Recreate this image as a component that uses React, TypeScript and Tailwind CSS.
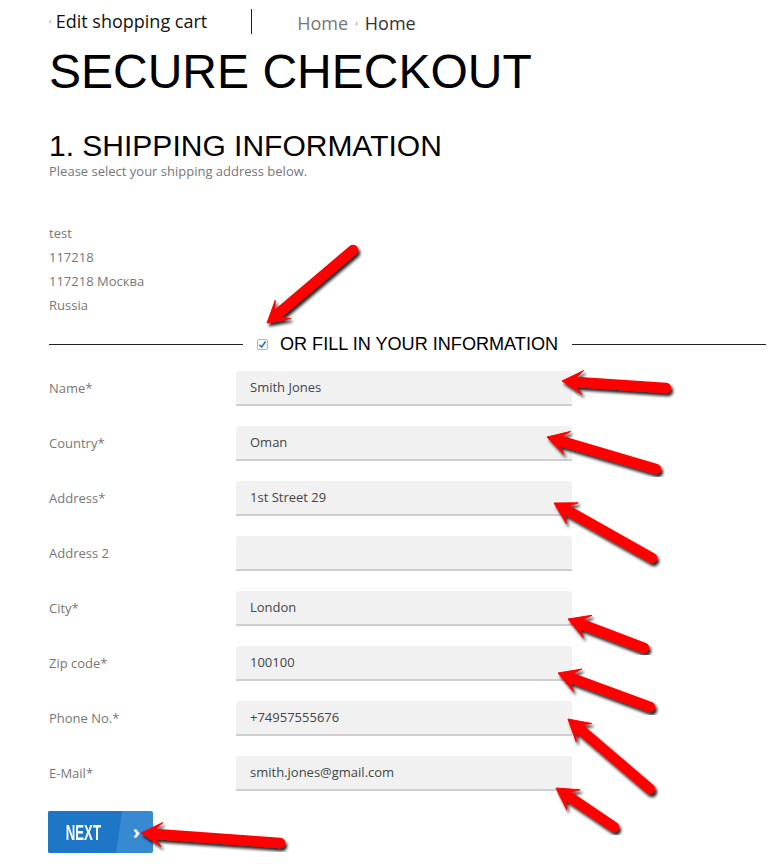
import React from 'react';

const sans = { fontFamily: '"Open Sans", "Noto Sans", sans-serif' };

interface ArrowProps {
  x1: number;
  y1: number;
  x2: number;
  y2: number;
}

// red annotation arrow, tail (x1,y1) -> tip (x2,y2)
function Arrow({ x1, y1, x2, y2 }: ArrowProps) {
  const dx = x2 - x1;
  const dy = y2 - y1;
  const len = Math.hypot(dx, dy);
  const ux = dx / len;
  const uy = dy / len;
  const nx = -uy;
  const ny = ux;
  const H = 21;
  const W = 12;
  const bx = x2 - ux * H;
  const by = y2 - uy * H;
  const nkx = x2 - ux * (H * 0.7);
  const nky = y2 - uy * (H * 0.7);
  const head = [
    [x2, y2],
    [bx + nx * W, by + ny * W],
    [nkx + nx * 5, nky + ny * 5],
    [nkx - nx * 5, nky - ny * 5],
    [bx - nx * W, by - ny * W],
  ]
    .map((p) => p.join(','))
    .join(' ');
  return (
    <g filter="url(#arrowShadow)">
      <line x1={x1} y1={y1} x2={nkx} y2={nky} stroke="#ff0000" strokeWidth="10.5" strokeLinecap="round" />
      <polygon points={head} fill="#ff0000" strokeLinejoin="round" stroke="#ff0000" strokeWidth="1" />
    </g>
  );
}

const arrows: ArrowProps[] = [
  { x1: 353, y1: 250, x2: 267, y2: 323 },
  { x1: 666, y1: 388, x2: 562, y2: 381 },
  { x1: 656, y1: 469, x2: 547, y2: 437 },
  { x1: 652, y1: 558, x2: 554, y2: 503 },
  { x1: 644, y1: 648, x2: 568, y2: 619 },
  { x1: 650, y1: 707, x2: 558, y2: 673 },
  { x1: 650, y1: 789, x2: 568, y2: 719 },
  { x1: 614, y1: 827, x2: 556, y2: 788 },
  { x1: 280, y1: 843, x2: 141, y2: 833 },
];

const fields = [
  { label: 'Name*', value: 'Smith Jones' },
  { label: 'Country*', value: 'Oman' },
  { label: 'Address*', value: '1st Street 29' },
  { label: 'Address 2', value: '' },
  { label: 'City*', value: 'London' },
  { label: 'Zip code*', value: '100100' },
  { label: 'Phone No.*', value: '+74957555676' },
  { label: 'E-Mail*', value: 'smith.jones@gmail.com' },
];

export default function App() {
  return (
    <div className="relative w-full h-[864px] overflow-hidden bg-white">
      <div className="pl-[49px] pr-[18px]">
        {/* breadcrumbs */}
        <div className="flex items-start mt-[9px] h-[25px]" style={sans}>
          <span className="text-[9px] leading-[24px] text-[#c48a8a] mr-[4px]">‹</span>
          <span className="text-[18px] leading-[24px] text-[#111]">Edit shopping cart</span>
          <span className="w-px h-[25px] bg-[#222] ml-[44px]" />
          <div className="flex items-center ml-[45px] mt-[2px] text-[18px] leading-[24px]">
            <span className="text-[#777]">Home</span>
            <span className="text-[9px] text-[#d0704a] mx-[7px]">›</span>
            <span className="text-[#333]">Home</span>
          </div>
        </div>

        <h1
          className="mt-[14px] text-[48px] leading-[48px] text-black"
          style={{ fontFamily: '"Liberation Sans", Arial, sans-serif' }}
        >
          SECURE CHECKOUT
        </h1>

        <h2
          className="mt-[35px] text-[30px] leading-[30px] text-black"
          style={{ fontFamily: '"Liberation Sans", Arial, sans-serif' }}
        >
          1. SHIPPING INFORMATION
        </h2>
        <p className="mt-[1px] text-[13px] leading-[18px] text-[#777]" style={sans}>
          Please select your shipping address below.
        </p>

        <div className="mt-[41px] text-[13px] leading-[24px] text-[#777]" style={sans}>
          <div>test</div>
          <div>117218</div>
          <div>117218 Москва</div>
          <div>Russia</div>
        </div>

        {/* divider */}
        <div className="mt-[17px] h-[20px] flex items-center">
          <div className="flex-1 h-px bg-[#222]" />
          <span className="ml-[14px] w-[11px] h-[11px] border border-[#b5b5b5] rounded-[2px] bg-white flex items-center justify-center">
            <svg width="9" height="9" viewBox="0 0 8 8">
              <path d="M1.2 4.2 L3.2 6.2 L6.8 1.4" fill="none" stroke="#2d6fc0" strokeWidth="1.4" />
            </svg>
          </span>
          <span
            className="ml-[12px] mr-[14px] text-[18.1px] leading-[20px] text-black"
            style={{ fontFamily: '"Liberation Sans", Arial, sans-serif' }}
          >
            OR FILL IN YOUR INFORMATION
          </span>
          <div className="flex-1 h-px bg-[#222]" />
        </div>

        {/* form */}
        <div className="mt-[17px] flex flex-col gap-[20px]" style={sans}>
          {fields.map((f) => (
            <div key={f.label} className="flex items-center h-[35px]">
              <span className="w-[187px] text-[13px] text-[#777]">{f.label}</span>
              <div className="w-[336px] h-[35px] bg-[#f1f1f1] border-b-2 border-[#cfcfcf] rounded-t-[3px] pl-[14px] flex items-center text-[13px] text-[#444]">
                {f.value}
              </div>
            </div>
          ))}
        </div>

        <button className="mt-[20px] -ml-px relative flex w-[105px] h-[42px] bg-[#3789d2] rounded-[2px] overflow-hidden">
          <span className="w-[74px] h-full bg-[#1d76c6] flex items-center justify-center [clip-path:polygon(0_0,100%_0,calc(100%-6px)_100%,0_100%)]">
            <span
              className="inline-block text-white text-[22px] leading-none font-bold scale-x-[0.6] -ml-[4px] mt-[2px]"
              style={{ fontFamily: '"Liberation Sans", Arial, sans-serif' }}
            >
              NEXT
            </span>
          </span>
          <span className="flex-1 h-full flex items-center justify-center text-white text-[20px] font-bold pr-[2px]" style={sans}>
            ›
          </span>
        </button>
      </div>

      {/* annotation arrows */}
      <svg className="absolute inset-0 pointer-events-none" width="784" height="864">
        <defs>
          <filter id="arrowShadow" x="-20%" y="-20%" width="140%" height="140%">
            <feDropShadow dx="2" dy="3" stdDeviation="1.6" floodColor="#000" floodOpacity="0.85" />
          </filter>
        </defs>
        {arrows.map((a, i) => (
          <Arrow key={i} {...a} />
        ))}
      </svg>
    </div>
  );
}
